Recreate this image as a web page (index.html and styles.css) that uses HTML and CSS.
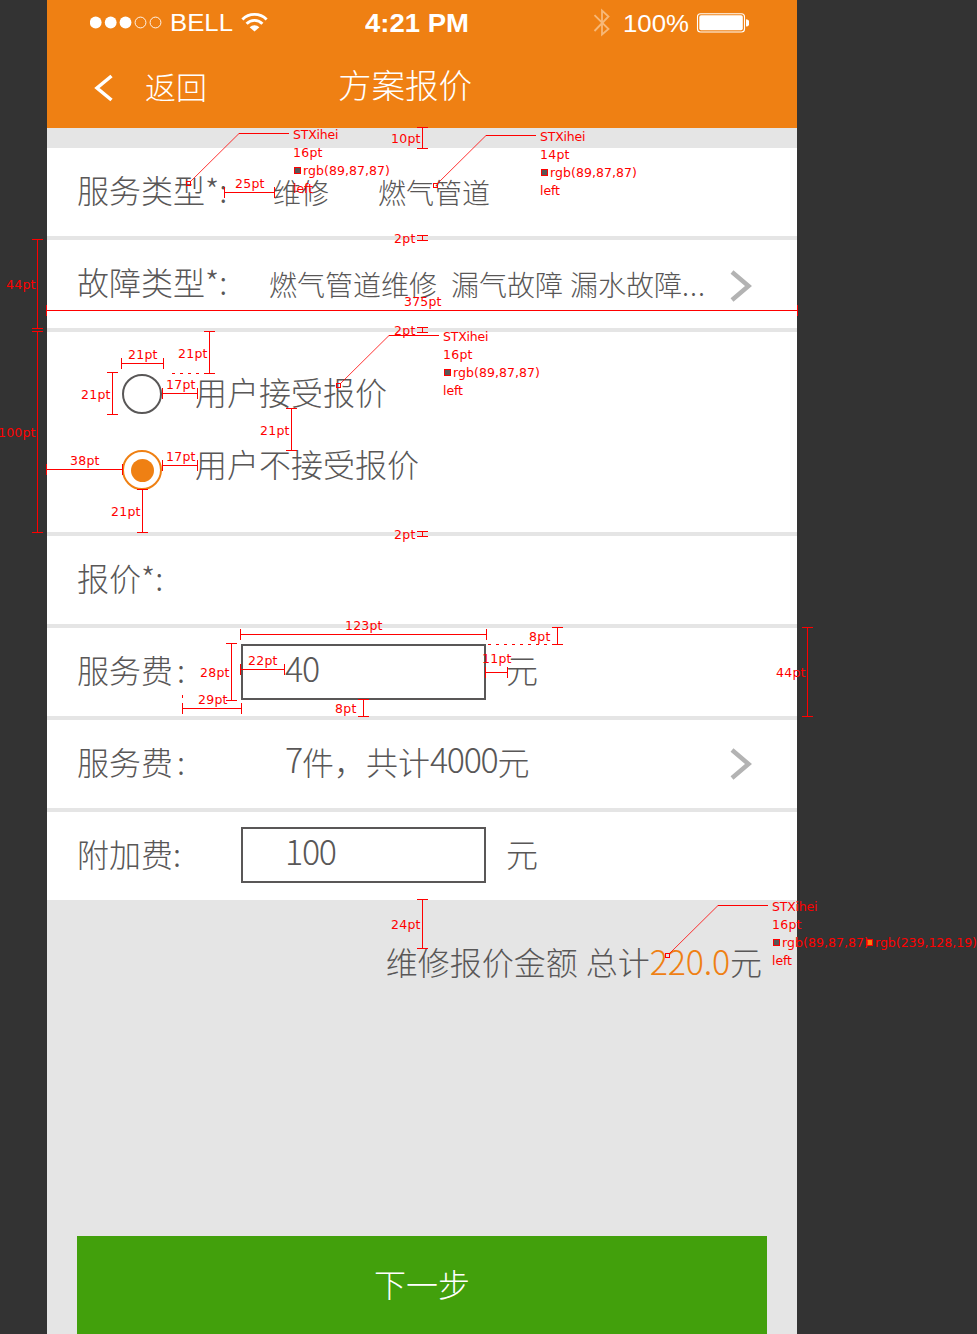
FILE: index.html
```html
<!DOCTYPE html>
<html lang="zh-CN">
<head>
<meta charset="utf-8">
<title>方案报价</title>
<link rel="stylesheet" href="styles.css">
</head>
<body>
<div class="board">
  <main class="phone">
    <header class="header">
      <div class="status">
        <svg class="status-left" width="180" height="44" viewBox="0 0 180 44">
          <g fill="#fff"><circle cx="5.700" cy="22.500" r="5.900"/><circle cx="20.700" cy="22.500" r="5.900"/><circle cx="35.500" cy="22.500" r="5.900"/></g>
          <g fill="none" stroke="#fff" stroke-width="0.900"><circle cx="50.500" cy="22.500" r="5.400"/><circle cx="65.500" cy="22.500" r="5.400"/></g>
          <text class="carrier" x="80" y="30.500" textLength="63" lengthAdjust="spacingAndGlyphs">BELL</text>
          <g fill="none" stroke="#fff" stroke-width="2.900"><path d="M152.400 19.400a17 17 0 0 1 24.200 0"/><path d="M156.600 23.700a11 11 0 0 1 15.800 0"/></g>
          <path fill="#fff" d="M164.500 31.500L159.600 27.200a7 7 0 0 1 9.800 0z"/>
        </svg>
        <svg class="status-time" width="106" height="44" viewBox="0 0 106 44">
          <text class="clock" x="0" y="32" textLength="104" lengthAdjust="spacingAndGlyphs">4:21 PM</text>
        </svg>
        <svg class="status-right" width="156" height="44" viewBox="0 0 156 44">
          <path fill="none" stroke="#f7b878" stroke-width="1.800" d="M1.500 15.200L15.500 29 9 34.500V10.500L15.500 16.500 1.500 31"/>
          <text class="carrier" x="30" y="32" textLength="66" lengthAdjust="spacingAndGlyphs">100%</text>
          <rect x="104.500" y="13.700" width="47" height="18.300" rx="3" fill="none" stroke="#fff" stroke-width="1.100"/>
          <rect x="106.300" y="15.300" width="43.500" height="15" rx="1.800" fill="#fff"/>
          <path fill="#fff" d="M153 19.200a3.400 3.700 0 0 1 0 7.400z"/>
        </svg>
      </div>
      <nav class="nav">
        <svg class="back-icon" width="20" height="28" viewBox="0 0 20 28"><path fill="none" stroke="#fff" stroke-width="3.500" d="M17.500 2L3 14 17.500 26"/></svg>
        <span class="back">返回</span>
        <h1 class="title">方案报价</h1>
      </nav>
    </header>

    <section class="rows">
      <div class="row">
        <span class="label">服务类型*:</span>
        <span class="value value-type">维修</span>
        <span class="value value-pipe">燃气管道</span>
      </div>
      <div class="row">
        <span class="label label-fault">故障类型*:</span>
        <span class="value value-fault"><span>燃气管道维修</span><span>漏气故障</span><span>漏水故障<span class="dots">...</span></span></span>
        <svg class="chevron" width="22" height="32" viewBox="0 0 22 32"><path d="M2 2L18.500 16 2 30"/></svg>
      </div>
      <div class="row row-choice">
        <div class="choice"><i class="radio"></i><span class="choice-text">用户接受报价</span></div>
        <div class="choice choice-on"><i class="radio"></i><span class="choice-text">用户不接受报价</span></div>
      </div>
      <div class="row"><span class="label">报价*:</span></div>
      <div class="row">
        <span class="label">服务费<span class="wide-colon">:</span></span>
        <span class="field"><span class="num">40</span></span>
        <span class="unit">元</span>
      </div>
      <div class="row row-parts">
        <span class="label">服务费<span class="wide-colon">:</span></span>
        <span class="summary"><span class="num">7</span>件，共计<span class="num">4000</span>元</span>
        <svg class="chevron" width="22" height="32" viewBox="0 0 22 32"><path d="M2 2L18.500 16 2 30"/></svg>
      </div>
      <div class="row row-extra">
        <span class="label">附加费:</span>
        <span class="field"><span class="num">100</span></span>
        <span class="unit">元</span>
      </div>
    </section>

    <p class="total"><span>维修报价金额</span><span class="sum">总计<span class="amount">220.0</span>元</span></p>
    <div class="next">下一步</div>
  </main>

  <svg class="notes" width="977" height="1334" viewBox="0 0 977 1334">
    <g class="rules">
      <path d="M417 127.500h11M422.500 127v22M417 148.500h11"/>
      <path d="M224.500 187v11M224 192.500h51M274.500 187v11"/>
      <path d="M417 235.500h11M422.500 235v6M417 240.500h11"/>
      <path d="M32 239.500h11M37.500 239v89M32 328.500h11"/>
      <path d="M46.500 305v11M46 310.500h752M797.500 305v11"/>
      <path d="M417 327.500h11M422.500 327v6M417 332.500h11"/>
      <path d="M32 331.500h11M37.500 331v201M32 532.500h11"/>
      <path d="M121.500 358v11M121 363.500h43M163.500 358v11"/>
      <path d="M107 372.500h11M112.500 372v43M107 414.500h11"/>
      <path d="M204 331.500h11M209.500 331v43M204 373.500h11"/>
      <path d="M172 373.500h28" stroke-dasharray="3 5"/>
      <path d="M162.500 388v11M162 393.500h36M197.500 388v11"/>
      <path d="M286 408.500h11M291.500 408v43M286 450.500h11"/>
      <path d="M162.500 460v11M162 465.500h36M197.500 460v11"/>
      <path d="M46.500 464v11M46 469.500h77M122.500 464v11"/>
      <path d="M137 489.500h11M142.500 489v43M137 532.500h11"/>
      <path d="M417 531.500h11M422.500 531v6M417 536.500h11"/>
      <path d="M240.500 629v11M240 634.500h247M486.500 629v11"/>
      <path d="M226 643.500h11M231.500 643v58M226 700.500h11"/>
      <path d="M240.500 664v11M240 669.500h45M284.500 664v11"/>
      <path d="M182.500 703v11M182 708.500h60M241.500 703v11M182.500 695v3"/>
      <path d="M358 699.500h11M363.500 699v18M358 716.500h11"/>
      <path d="M485.500 667v11M485 672.500h23M507.500 667v11"/>
      <path d="M488 644.500h64" stroke-dasharray="3 5"/>
      <path d="M552 627.500h11M557.500 627v18M552 644.500h11"/>
      <path d="M802 627.500h11M807.500 627v90M802 716.500h11"/>
      <path d="M417 899.500h11M422.500 899v50M417 948.500h11"/>
      <path d="M239 133.500h50M486 135.500h50M389 335.500h50M718 905.500h50"/>
      <path d="M186.500 181.500h4v4h-4zM433.500 183.500h4v4h-4zM336.500 383.500h4v4h-4zM665.500 953.500h4v4h-4z"/>
    </g>
    <path class="leaders" d="M190 182L239 133.500M437 184L486 135.500M340 384L389 335.500M669 954L718 905.500"/>
    <g class="swatches">
      <path d="M294.500 167.500h6v6h-6zM541.500 169.500h6v6h-6zM444.500 369.500h6v6h-6zM773.500 939.500h6v6h-6z"/>
      <path class="swatch-orange" d="M866.500 939.500h6v6h-6z"/>
    </g>
    <g class="captions">
      <text x="391" y="143" textLength="29.500">10pt</text>
      <text x="235" y="188" textLength="29.500">25pt</text>
      <text x="394" y="243" textLength="21.500">2pt</text>
      <text x="6" y="289" textLength="29.500">44pt</text>
      <text x="404" y="306" textLength="37.500">375pt</text>
      <text x="394" y="335" textLength="21.500">2pt</text>
      <text x="-2" y="437" textLength="37.500">100pt</text>
      <text x="128" y="359" textLength="29.500">21pt</text>
      <text x="178" y="358" textLength="29.500">21pt</text>
      <text x="81" y="399" textLength="29.500">21pt</text>
      <text x="166" y="389" textLength="29.500">17pt</text>
      <text x="260" y="435" textLength="29.500">21pt</text>
      <text x="166" y="461" textLength="29.500">17pt</text>
      <text x="70" y="465" textLength="29.500">38pt</text>
      <text x="111" y="516" textLength="29.500">21pt</text>
      <text x="394" y="539" textLength="21.500">2pt</text>
      <text x="345" y="630" textLength="37.500">123pt</text>
      <text x="529" y="641" textLength="21.500">8pt</text>
      <text x="248" y="665" textLength="29.500">22pt</text>
      <text x="200" y="677" textLength="29.500">28pt</text>
      <text x="198" y="704" textLength="29.500">29pt</text>
      <text x="335" y="713" textLength="21.500">8pt</text>
      <text x="482" y="663" textLength="29.500">11pt</text>
      <text x="776" y="677" textLength="29.500">44pt</text>
      <text x="391" y="929" textLength="29.500">24pt</text>

      <text x="293" y="139" textLength="45.500">STXihei</text>
      <text x="293" y="157" textLength="29.500">16pt</text>
      <text x="303" y="175" textLength="87">rgb(89,87,87)</text>
      <text x="293" y="193" textLength="20">left</text>

      <text x="540" y="141" textLength="45.500">STXihei</text>
      <text x="540" y="159" textLength="29.500">14pt</text>
      <text x="550" y="177" textLength="87">rgb(89,87,87)</text>
      <text x="540" y="195" textLength="20">left</text>

      <text x="443" y="341" textLength="45.500">STXihei</text>
      <text x="443" y="359" textLength="29.500">16pt</text>
      <text x="453" y="377" textLength="87">rgb(89,87,87)</text>
      <text x="443" y="395" textLength="20">left</text>

      <text x="772" y="911" textLength="45.500">STXihei</text>
      <text x="772" y="929" textLength="29.500">16pt</text>
      <text x="782" y="947" textLength="87">rgb(89,87,87)</text>
      <text x="875" y="947" textLength="102">rgb(239,128,19)</text>
      <text x="772" y="965" textLength="20">left</text>
    </g>
  </svg>
</div>
</body>
</html>
```
FILE: styles.css
```css
* { box-sizing: border-box; }

body {
  margin: 0;
  background: #333;
  color: #595757;
  font-family: "Noto Sans CJK SC", sans-serif;
  font-weight: 300;
  font-size: 32px;
}

.board {
  position: relative;
  width: 977px;
  height: 1334px;
  overflow: hidden;
}

.phone {
  display: flex;
  flex-direction: column;
  width: 750px;
  height: 1334px;
  margin-left: 47px;
  background: #e5e5e5;
}

/* header */
.header {
  height: 128px;
  background: #ef8013;
  color: #fff;
}
.status { display: flex; height: 44px; padding-left: 43px; }
.status svg { flex: none; }
.status-time { margin-left: 95px; }
.status-right { margin-left: 122px; }
.carrier { font: 400 24px "Liberation Sans", sans-serif; fill: #fff; }
.clock { font: 700 25px "Liberation Sans", sans-serif; fill: #fff; }

.nav { display: flex; align-items: center; height: 84px; padding-left: 47px; }
.back-icon { flex: none; margin-top: 3px; }
.back { width: 64px; margin: 0 0 1px 31px; font-size: 31px; line-height: 48px; white-space: nowrap; }
.title {
  margin: 0 0 4px 129px;
  font-size: 33.500px;
  font-weight: 300;
  line-height: 48px;
  white-space: nowrap;
}

/* list */
.rows { display: flex; flex-direction: column; gap: 4px; padding-top: 20px; }
.row {
  display: flex;
  align-items: center;
  height: 88px;
  padding: 0 45px 6px 30px;
  background: #fff;
  line-height: 48px;
  white-space: nowrap;
}
.label { flex: none; width: 164px; }
.wide-colon { margin-left: 4px; }
.value { font-size: 28px; }
.value-type { width: 105px; margin: 6px 0 0 32px; }
.value-pipe { margin-top: 6px; }
.value-fault { display: flex; margin: 6px 0 0 28px; }
.value-fault > span + span { margin-left: 7px; }
.value-fault > span:nth-child(2) { margin-left: 14px; }
.dots { letter-spacing: 1px; }
.chevron { flex: none; margin: 10px 0 0 auto; }
.chevron path { fill: none; stroke: #b3b3b3; stroke-width: 4.500; }
.row-parts .chevron { margin-top: 6px; }

.row-choice {
  flex-direction: column;
  align-items: flex-start;
  gap: 36px;
  height: 200px;
  padding: 42px 0 0 75px;
}
.choice { display: flex; align-items: center; height: 40px; }
.radio {
  display: grid;
  place-items: center;
  width: 40px;
  height: 40px;
  border: 2px solid #595757;
  border-radius: 50%;
}
.choice-text { margin: 0 0 6px 33px; }
.choice-on .choice-text { margin-bottom: 14px; }
.choice-on .radio { border-color: #ef8013; }
.choice-on .radio::after {
  content: "";
  width: 23px;
  height: 23px;
  border-radius: 50%;
  background: #ef8013;
}

.field {
  flex: none;
  width: 245px;
  height: 56px;
  margin-top: 6px;
  padding: 0 0 0 42px;
  border: 2px solid #595757;
}
.row-extra .field { margin-top: 4px; }
.unit { margin-left: 20px; }
.summary { margin-left: 44px; }
.num {
  font-size: 34px;
  line-height: 1;
  letter-spacing: -1.300px;
  vertical-align: 2px;
}

/* footer */
.total {
  display: flex;
  justify-content: flex-end;
  gap: 8px;
  margin: 37px 35px 0 0;
  line-height: 48px;
  white-space: nowrap;
}
.amount { font-size: 34px; line-height: 1; letter-spacing: -0.200px; color: #ef8013; }
.next {
  height: 98px;
  margin: auto 30px 0;
  background: #42a00c;
  color: #fff;
  line-height: 94px;
  text-align: center;
}

/* measurement layer */
.notes { position: absolute; left: 0; top: 0; }
.rules { fill: none; stroke: #f00; stroke-width: 1; shape-rendering: crispEdges; }
.leaders { fill: none; stroke: #f00; stroke-width: 0.800; }
.swatches { fill: #595757; stroke: #f00; shape-rendering: crispEdges; }
.swatch-orange { fill: #ef8013; }
.captions { font: 400 12.500px "DejaVu Sans", sans-serif; fill: #f00; }
```
